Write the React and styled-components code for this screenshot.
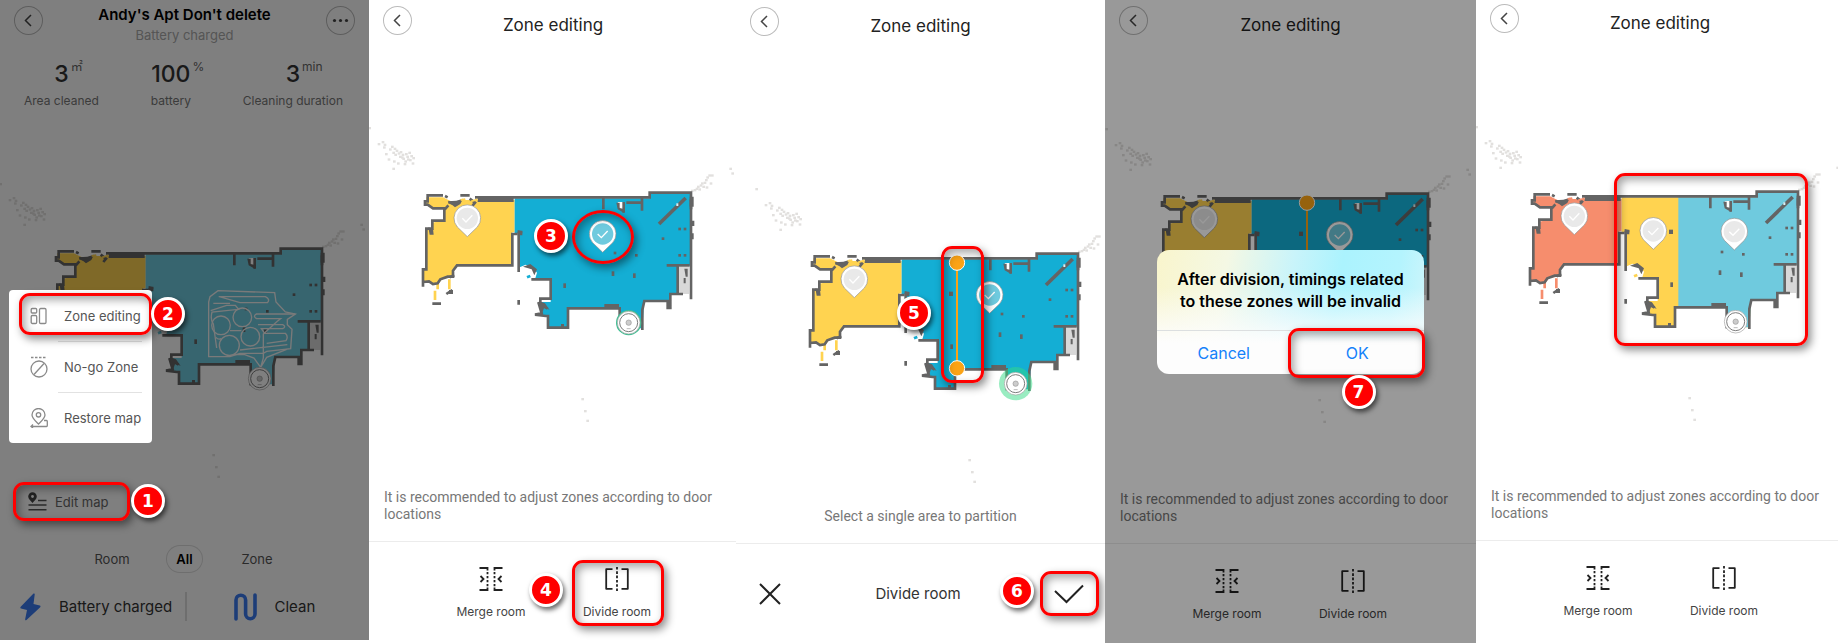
import React from "react";
import styled, { createGlobalStyle } from "styled-components";

const WALL = "#646464";
const YELLOW = "#ffd350";
const BLUE = "#14aed4";
const LIGHT_BLUE = "#6fcade";
const CORAL = "#f68d6d";

const GRAVEL = [
  [30, 432], [42, 426], [48, 434], [46, 442], [52, 462], [60, 478], [74, 506],
  [64, 448], [70, 440], [78, 446], [84, 452], [74, 458], [80, 464], [90, 460],
  [76, 484], [88, 490], [96, 456], [102, 464], [94, 470], [104, 476], [110, 484],
  [112, 462], [116, 470], [122, 458], [128, 468], [134, 474], [124, 480], [132, 490],
  [118, 478], [108, 492], [100, 472], [2, 384], [1085, 506], [1091, 520],
  [970, 572], [978, 570], [984, 566], [992, 568], [988, 560], [996, 556], [1004, 560],
  [1000, 550], [1008, 548], [1012, 540], [1016, 532], [1022, 526], [1030, 526],
  [1014, 562], [1026, 550], [641, 1197], [649, 1233], [656, 1262],
];

const SPECKS = [
  [932, 687], [948, 687], [882, 716], [802, 766], [738, 759], [932, 766], [948, 766],
];

function Pin({ x, y, fill = "#e9e9e9" }) {
  return (
    <g transform={`translate(${x} ${y})`}>
      <path
        d="M0 55 L-30 26 A40 40 0 1 1 30 26 Z"
        fill="#fff"
        stroke="#8f8f8f"
        strokeWidth="2"
      />
      <circle r="32" fill={fill} />
      <path d="M-15 0 L-4 11 L15 -9" fill="none" stroke="#fff" strokeWidth="4" />
    </g>
  );
}

function FloorMap({ left, right, far, door = true, pins = [], ring, halo, cut, trail }) {
  return (
    <MapSvg viewBox="0 360 1104 900" role="img" aria-label="Floor map">
      <g fill="#e2e0de">
        {GRAVEL.map(([x, y]) => (
          <rect key={`${x}-${y}`} x={x - 4} y={y - 3} width="8" height="7" />
        ))}
      </g>

      {/* rooms */}
      <path
        fill={left}
        d="M172 592H222L246 604L262 612L280 600H437V697H430V796H262L250 810V826L238 834L220 836L210 850L190 852L176 844L162 850V808H170V690H188V668L222 662L230 624H196L172 612Z"
      />
      <path
        fill={right}
        d="M437 595H842V580H965V797H925V882H904V926H896V903H824V930L820 985H752V925H597V983H537V948L514 946L522 930L512 906H545V838H498L504 818L490 800L470 794L452 802V700H437Z"
      />
      {far && (
        <path
          fill={far}
          d="M607 595H842V580H965V797H925V882H904V926H896V903H824V930L820 985H752V925H607Z"
        />
      )}
      <path fill="#d8d8d8" d="M928 800H960V882H928Z" />
      <path fill="#fff" d="M430 704H446V800H434ZM746 606L764 606L764 632L752 628Z" />

      {/* loose ends below the left room */}
      <path
        d="M206 850V868M198 872V900M241 838V868"
        stroke={left}
        strokeWidth="8"
        fill="none"
      />

      {/* walls */}
      <g fill="none" stroke={WALL} strokeWidth="8">
        <path d="M222 586H176V604H168V614H176L192 625H230L238 616L226 630V662H190V686H172V808H162V860M162 846L180 844L192 852L206 850L214 838L236 830H252V812L264 796H430V702H446" />
        <path d="M228 588L236 592M274 586H302M302 596L318 608L310 618M318 592H842V578H966V898" />
        <path d="M449 696V816M449 900V914M446 696H460M487 838H545V896H514V914L536 926M508 906L518 940L498 944L530 948H537V983H597V925H752V985L764 990M820 990V930L826 903H896V924H904V882H942" />
        <path d="M966 598V628M972 662V678M970 700V718M893 796H962M926 796V884M703 594V628M819 594V632M772 608H818M764 606V638" />
        <path d="M190 911H216M232 882L250 870M242 832L256 826M238 606L254 612" />
      </g>
      <path
        d="M326 600H434M706 918H750"
        stroke={WALL}
        strokeWidth="12"
        fill="none"
      />
      <path
        d="M236 604L262 602L282 596L274 612L258 622L246 612ZM462 800L484 792L504 808L496 826L488 808ZM742 608H752V624L768 628L764 638L746 628ZM178 682L192 686L194 704H182ZM512 904L528 910L542 930L526 922L520 938L512 926ZM962 590H974V620H962ZM446 690L460 694V706H448ZM946 806H956V830H950ZM944 834H950V850H944ZM240 870H252V882H240Z"
        fill={WALL}
      />
      <path d="M275 600L286 598L290 612M306 604L326 598" stroke={left} strokeWidth="6" fill="none" />
      <path d="M474 832L484 828" stroke={right} strokeWidth="8" />
      {door && (
        <>
          <path d="M870 672L950 594" stroke={WALL} strokeWidth="11" />
          <rect x="922" y="610" width="6" height="8" fill="#d8f1f6" />
        </>
      )}
      <g fill={WALL}>
        {SPECKS.map(([x, y]) => (
          <rect key={`${x}-${y}`} x={x - 4} y={y - 4} width="8" height="8" />
        ))}
        {!trail && <rect x="579" y="692" width="12" height="13" />}
        <rect x="728" y="814" width="8" height="14" />
        <rect x="792" y="820" width="8" height="14" />
        <rect x="583" y="850" width="8" height="14" />
        <rect x="576" y="972" width="9" height="9" />
      </g>

      {trail && (
        <g fill="none" stroke="#f4f4f4" strokeWidth="4">
          <path d="M626 904V738L630 722L654 704L824 710L828 738L856 768L886 774L862 790V806L876 820L872 878L800 886L790 892H720L690 902H626" />
          <path d="M640 742H690M656 722H796Q812 730 802 740H720L658 722M632 764L680 748H706L716 760L636 768Q630 790 640 804L650 876" />
          <path d="M768 774Q758 782 770 788H842L832 796L790 834V906L782 934M886 774H768M774 806H848Q860 812 848 818H784L794 832H856Q866 842 858 854L800 862M862 866L720 882M700 896H734L762 906L782 934L800 904L860 880M648 844Q654 852 664 848M690 824H724" />
          <circle cx="663" cy="808" r="28" />
          <circle cx="727" cy="784" r="28" />
          <circle cx="751" cy="842" r="28" />
          <circle cx="688" cy="868" r="30" />
        </g>
      )}

      {halo && <circle cx="779" cy="968" r="50" fill="#34d984" fillOpacity="0.5" />}
      {ring && <circle cx="779" cy="968" r="38" fill="#3fbf93" />}
      <circle cx="779" cy="968" r="34" fill="#fff" stroke="#a2a2a2" strokeWidth="2" />
      <circle cx="779" cy="968" r="27" fill="none" stroke="#7c7c7c" strokeWidth="3" />
      <circle cx="779" cy="968" r="8" fill="#ccc" stroke="#999" strokeWidth="2" />
      <path d="M773 986H785" stroke="#999" strokeWidth="2" />

      {pins.map((pin) => (
        <Pin key={pin.x} {...pin} />
      ))}

      {cut && (
        <g fill="#fba316" stroke="#fba316">
          <path d="M603 605V922" strokeWidth="6" />
          <circle cx="603" cy="605" r="23" stroke="#fff" strokeWidth="3" />
          <circle cx="603" cy="922" r="23" stroke="#fff" strokeWidth="3" />
        </g>
      )}
    </MapSvg>
  );
}

function ChevronIcon() {
  return (
    <svg width="29" height="29" viewBox="0 0 29 29" fill="none">
      <path d="M17 9L11.500 14.500L17 20" stroke="#444" strokeWidth="1.500" />
    </svg>
  );
}

function MergeIcon() {
  return (
    <svg width="24" height="24" viewBox="0 0 24 24" fill="none" stroke="#222" strokeWidth="1.800">
      <path d="M0.500 1H8.500V3.500M0.500 23H8.500V20.500M23.500 1H15.500V3.500M23.500 23H15.500V20.500" />
      <path d="M8.500 5V20M15.500 5V20" strokeDasharray="2.200 1.800" />
      <path d="M1.500 9L4.500 12L1.500 15M22.500 9L19.500 12L22.500 15" />
    </svg>
  );
}

function DivideIcon() {
  return (
    <svg width="24" height="24" viewBox="0 0 24 24" fill="none" stroke="#222" strokeWidth="1.800">
      <path d="M7.500 2.200H1.200V21.800H7.500M16.500 2.200H22.800V21.800H16.500" strokeLinejoin="round" />
      <path d="M12 0V24" strokeDasharray="2.600 1.700" />
    </svg>
  );
}

function ZonesIcon() {
  return (
    <svg width="18" height="18" viewBox="0 0 18 18" fill="none" stroke="#8a8a8a" strokeWidth="1.300">
      <rect x="1.200" y="1.500" width="5.500" height="4.500" rx="1" />
      <rect x="1.200" y="8.500" width="5.500" height="8" rx="1.200" />
      <rect x="9.500" y="1.500" width="6.500" height="15" rx="1.200" />
    </svg>
  );
}

function NoGoIcon() {
  return (
    <svg width="18" height="22" viewBox="0 0 18 22" fill="none" stroke="#8a8a8a" strokeWidth="1.300">
      <path d="M1 1.500H17" strokeDasharray="2.500 1.500" />
      <circle cx="9" cy="13" r="8" />
      <path d="M4 18.500L14 7.500" />
    </svg>
  );
}

function RestoreIcon() {
  return (
    <svg width="18" height="20" viewBox="0 0 18 20" fill="none" stroke="#8a8a8a" strokeWidth="1.300">
      <path d="M8.500 16C5 12.500 2 10 2 7A6.500 6.500 0 0 1 15 7C15 10 12 12.500 8.500 16Z" />
      <circle cx="8.500" cy="6.800" r="2.200" />
      <path d="M14 12.500H16.500Q17.300 12.500 17.300 13.500V17.500Q17.300 18.500 16.500 18.500H1M3 16.500L1 18.500L3 20" />
    </svg>
  );
}

function EditMapIcon() {
  return (
    <svg width="19" height="19" viewBox="0 0 19 19" fill="none">
      <path
        d="M4.500 11C2.500 8.500 0.200 7 0.200 4.500A4.300 4.300 0 0 1 8.800 4.500C8.800 7 6.500 8.500 4.500 11Z"
        fill="#444"
      />
      <circle cx="4.500" cy="4.500" r="1.400" fill="#fff" />
      <path d="M10 8.500H18.500M0.500 13H18.500M0.500 17.800H18.500" stroke="#555" strokeWidth="1.500" />
    </svg>
  );
}

function BackButton() {
  return (
    <RoundButton type="button" aria-label="Back">
      <ChevronIcon />
    </RoundButton>
  );
}

function ToolFooter({ height, children }) {
  return (
    <Footer $height={height}>
      <Tools>
        <Tool type="button">
          <MergeIcon />
          Merge room
        </Tool>
        <Anchor>
          <Tool type="button">
            <DivideIcon />
            Divide room
          </Tool>
          {children}
        </Anchor>
      </Tools>
    </Footer>
  );
}

const zonePins = [
  { x: 295, y: 655 },
  { x: 701, y: 702, fill: LIGHT_BLUE },
];

function HomeScreen() {
  return (
    <Screen $short>
      <Header $top={6}>
        <BackButton />
        <Heading>
          <Name>Andy's Apt Don't delete</Name>
          <Status>Battery charged</Status>
        </Heading>
        <RoundButton type="button" aria-label="More">
          <svg width="29" height="29" viewBox="0 0 29 29" fill="#444">
            <circle cx="8.500" cy="14.500" r="1.600" />
            <circle cx="14.500" cy="14.500" r="1.600" />
            <circle cx="20.500" cy="14.500" r="1.600" />
          </svg>
        </RoundButton>
      </Header>
      <Stats>
        <Stat>
          <Value>
            3<Unit>㎡</Unit>
          </Value>
          Area cleaned
        </Stat>
        <Stat>
          <Value>
            100<Unit>%</Unit>
          </Value>
          battery
        </Stat>
        <Stat>
          <Value>
            3<Unit>min</Unit>
          </Value>
          Cleaning duration
        </Stat>
      </Stats>
      <Stage $top={66}>
        <FloorMap left={YELLOW} right={LIGHT_BLUE} door={false} trail />
      </Stage>
      <EditAnchor>
        <EditButton type="button">
          <EditMapIcon />
          Edit map
        </EditButton>
        <Callout $x={0} $y={0} $w={117} $h={39} />
        <Badge $x={118} $y={2}>1</Badge>
      </EditAnchor>
      <Tabs>
        <Tab type="button">Room</Tab>
        <Tab type="button" $active>
          All
        </Tab>
        <Tab type="button">Zone</Tab>
      </Tabs>
      <Actions>
        <Action type="button">
          <svg width="21" height="28" viewBox="0 0 21 28" fill="#3b7bf0">
            <path d="M13.500 0.500Q15 0 14.700 1.500L13.500 11L19.800 12.500Q21 13 20.200 14.200L6.500 27Q5 28 5.200 26L7 17L1 15.500Q-0.200 15 0.700 13.800Z" />
          </svg>
          Battery charged
        </Action>
        <Action type="button" $second>
          <svg width="23" height="28" viewBox="0 0 23 28" fill="none">
            <path
              d="M2 26V7A4.800 4.800 0 0 1 11.600 7V21A4.700 4.700 0 0 0 21 21V2"
              stroke="#3b7bf0"
              strokeWidth="3.600"
              strokeLinecap="round"
            />
          </svg>
          Clean
        </Action>
      </Actions>
      <Scrim $alpha={0.5} />
      <Menu>
        <MenuItem>
          <MenuButton type="button">
            <ZonesIcon />
            Zone editing
          </MenuButton>
          <Callout $x={10} $y={3} $w={133} $h={42} />
          <Badge $x={142} $y={7}>2</Badge>
        </MenuItem>
        <MenuItem>
          <MenuButton type="button">
            <NoGoIcon />
            No-go Zone
          </MenuButton>
        </MenuItem>
        <MenuItem>
          <MenuButton type="button">
            <RestoreIcon />
            Restore map
          </MenuButton>
        </MenuItem>
      </Menu>
    </Screen>
  );
}

function App() {
  return (
    <>
      <GlobalStyle />
      <Board>
        <HomeScreen />

        <Screen>
          <Header $top={6}>
            <BackButton />
            <Title>Zone editing</Title>
          </Header>
          <Stage $top={72}>
            <FloorMap left={YELLOW} right={BLUE} pins={zonePins} ring />
            <Callout $round $x={203} $y={90} $w={62} $h={54} />
            <Badge $x={165} $y={99}>3</Badge>
          </Stage>
          <Hint>It is recommended to adjust zones according to door locations</Hint>
          <ToolFooter height={102}>
            <Callout $x={18} $y={18} $w={92} $h={66} />
            <Badge $x={-25} $y={31}>4</Badge>
          </ToolFooter>
        </Screen>

        <Screen>
          <Header $top={7}>
            <BackButton />
            <Title>Zone editing</Title>
          </Header>
          <Stage $top={133} $left={20}>
            <FloorMap left={YELLOW} right={BLUE} pins={zonePins} halo cut />
            <Callout $x={205} $y={65} $w={43} $h={137} />
            <Badge $x={161} $y={115}>5</Badge>
          </Stage>
          <Hint $center>Select a single area to partition</Hint>
          <Footer $height={100}>
            <ConfirmBar>
              <IconButton type="button" aria-label="Cancel">
                <svg width="24" height="24" viewBox="0 0 24 24" stroke="#222" strokeWidth="2">
                  <path d="M2 2L22 22M22 2L2 22" />
                </svg>
              </IconButton>
              <span>Divide room</span>
              <Anchor>
                <IconButton type="button" aria-label="Confirm">
                  <svg width="30" height="20" viewBox="0 0 30 20" fill="none" stroke="#222" strokeWidth="2">
                    <path d="M1 7L12.500 18L29 1.500" />
                  </svg>
                </IconButton>
                <Callout $x={-14} $y={-13} $w={59} $h={45} />
                <Badge $x={-54} $y={-10}>6</Badge>
              </Anchor>
            </ConfirmBar>
          </Footer>
        </Screen>

        <Screen>
          <Header $top={6}>
            <BackButton />
            <Title>Zone editing</Title>
          </Header>
          <Stage $top={73} $left={1}>
            <FloorMap left={YELLOW} right={BLUE} pins={zonePins} cut />
          </Stage>
          <Hint>It is recommended to adjust zones according to door locations</Hint>
          <ToolFooter height={100} />
          <Scrim $alpha={0.4} />
          <Dialog role="alertdialog" aria-labelledby="divide-message">
            <Message id="divide-message">
              After division, timings related to these zones will be invalid
            </Message>
            <Choices>
              <Choice type="button">Cancel</Choice>
              <Anchor>
                <Choice type="button">OK</Choice>
                <Callout $x={-3} $y={-3} $w={137} $h={50} />
                <Badge $x={51} $y={44}>7</Badge>
              </Anchor>
            </Choices>
          </Dialog>
        </Screen>

        <Screen>
          <Header $top={4}>
            <BackButton />
            <Title>Zone editing</Title>
          </Header>
          <Stage $top={71}>
            <FloorMap
              left={CORAL}
              right={YELLOW}
              far={LIGHT_BLUE}
              pins={[
                { x: 295, y: 652 },
                { x: 532, y: 696 },
                { x: 775, y: 698 },
              ]}
            />
            <Callout $x={138} $y={54} $w={194} $h={173} />
          </Stage>
          <Hint>It is recommended to adjust zones according to door locations</Hint>
          <ToolFooter height={103} />
        </Screen>
      </Board>
    </>
  );
}

const GlobalStyle = createGlobalStyle`
  body {
    margin: 0;
    background: #fff;
    font-family: Inter, "Noto Sans CJK SC", sans-serif;
    color: #222;
  }
  button {
    font: inherit;
    color: inherit;
    background: none;
    border: 0;
    padding: 0;
    cursor: pointer;
  }
  svg {
    display: block;
    flex: none;
  }
`;
const Board = styled.main`
  display: grid;
  grid-template-columns:
    minmax(0, 369fr) minmax(0, 367fr) minmax(0, 369fr) minmax(0, 371fr)
    minmax(0, 362fr);
  min-height: 100vh;
`;
const Screen = styled.section`
  position: relative;
  display: flex;
  flex-direction: column;
  overflow: hidden;
  background: #fff;
  margin-bottom: ${(p) => (p.$short ? 3 : 0)}px;
  > * {
    min-width: 368px;
    box-sizing: border-box;
  }
`;
const Header = styled.header`
  display: grid;
  grid-template-columns: 29px 1fr 29px;
  align-items: start;
  height: 48px;
  padding: ${(p) => p.$top}px 14px 0;
`;
const RoundButton = styled.button`
  box-sizing: border-box;
  width: 29px;
  height: 29px;
  border-radius: 50%;
  box-shadow: inset 0 0 0 1px #bbb;
`;
const Title = styled.h2`
  margin: 8px 0 0;
  font-size: 17px;
  line-height: 22px;
  font-weight: 400;
  text-align: center;
`;
const Heading = styled.div`
  text-align: center;
  margin-top: -2px;
`;
const Name = styled.h1`
  margin: 0;
  font-size: 15px;
  line-height: 22px;
  font-weight: 600;
  color: #000;
`;
const Status = styled.div`
  font-size: 13px;
  line-height: 18px;
  color: #aaa;
`;
const Stats = styled.div`
  display: flex;
  justify-content: space-between;
  padding: 12px 26px 0 24px;
`;
const Stat = styled.div`
  font-size: 12px;
  line-height: 18px;
  color: #777;
  text-align: center;
`;
const Value = styled.div`
  position: relative;
  width: max-content;
  margin: 0 auto 4px;
  font-size: 23px;
  line-height: 28px;
  font-weight: 500;
  color: #333;
`;
const Unit = styled.sup`
  position: absolute;
  left: 100%;
  top: 0;
  padding-left: 2px;
  font-size: 12px;
  line-height: 14px;
  font-weight: 400;
  color: #666;
`;
const Stage = styled.div`
  position: relative;
  flex: 1;
  margin-top: ${(p) => p.$top}px;
  padding-left: ${(p) => p.$left || 0}px;
`;
const MapSvg = styled.svg`
  width: 368px;
  height: 300px;
  overflow: visible;
`;
const Hint = styled.p`
  margin: 0 0 18px;
  padding: 0 15px;
  font-family: Roboto, sans-serif;
  font-size: 14px;
  line-height: 17px;
  color: #777;
  text-align: ${(p) => (p.$center ? "center" : "left")};
`;
const Footer = styled.footer`
  box-sizing: border-box;
  height: ${(p) => p.$height}px;
  border-top: 1px solid #ececec;
`;
const Tools = styled.div`
  display: flex;
  padding-left: 59px;
`;
const Tool = styled.button`
  display: flex;
  flex-direction: column;
  align-items: center;
  gap: 13px;
  width: 126px;
  padding-top: 25px;
  font-size: 12px;
  line-height: 16px;
  color: #444;
`;
const Anchor = styled.div`
  position: relative;
`;
const ConfirmBar = styled.div`
  display: flex;
  align-items: center;
  justify-content: space-between;
  height: 100%;
  padding: 0 21px 0 22px;
  font-size: 15px;
  color: #333;
`;
const IconButton = styled.button`
  display: block;
`;
const EditAnchor = styled.div`
  position: relative;
  align-self: flex-start;
  margin: 0 13px 24px;
`;
const EditButton = styled.button`
  display: flex;
  align-items: center;
  gap: 8px;
  height: 39px;
  padding-left: 15px;
  font-size: 13px;
  color: #666;
`;
const Tabs = styled.nav`
  display: flex;
  justify-content: center;
  gap: 19px;
`;
const Tab = styled.button`
  height: 28px;
  min-width: ${(p) => (p.$active ? 37 : 70)}px;
  border-radius: 14px;
  box-shadow: ${(p) => (p.$active ? "inset 0 0 0 1px #ddd" : "none")};
  font-size: 13px;
  font-weight: ${(p) => (p.$active ? 600 : 400)};
  color: ${(p) => (p.$active ? "#000" : "#555")};
`;
const Actions = styled.div`
  display: grid;
  grid-template-columns: 1fr 1fr;
  align-items: center;
  height: 67px;
`;
const Action = styled.button`
  display: flex;
  align-items: center;
  gap: 18px;
  height: 29px;
  padding-left: ${(p) => (p.$second ? 47 : 20)}px;
  border-left: ${(p) => (p.$second ? "2px solid #ddd" : "none")};
  font-size: 15px;
  color: #333;
  white-space: nowrap;
`;
const Scrim = styled.div`
  position: absolute;
  inset: 0;
  background: rgba(0, 0, 0, ${(p) => p.$alpha});
`;
const Menu = styled.ul`
  position: absolute;
  left: 9px;
  top: 290px;
  width: 143px;
  && {
    min-width: 0;
  }
  margin: 0;
  padding: 0;
  list-style: none;
  background: #fff;
  border-radius: 4px;
`;
const MenuItem = styled.li`
  position: relative;
  & + &::before {
    content: "";
    position: absolute;
    left: 49px;
    right: 10px;
    top: 0;
    border-top: 1px solid #e2e2e2;
  }
`;
const MenuButton = styled.button`
  display: flex;
  align-items: center;
  gap: 16px;
  width: 100%;
  height: 51px;
  padding-left: 21px;
  font-size: 13px;
  color: #555;
  white-space: nowrap;
`;
const Dialog = styled.div`
  position: absolute;
  left: 52px;
  top: 250px;
  width: 267px;
  && {
    min-width: 0;
  }
  border-radius: 12px;
  background:
    linear-gradient(to bottom, transparent 30%, #fdfdfd 75%),
    linear-gradient(100deg, #f9f5cc 0%, #f4f8e4 25%, #c9f4fa 48%, #abf3fe 65%, #b4f4fe 85%, #d5f6fa 100%);
`;
const Message = styled.p`
  margin: 0;
  padding: 18px 12px 18px;
  font-size: 16px;
  line-height: 22px;
  font-weight: 600;
  color: #000;
  text-align: center;
`;
const Choices = styled.div`
  display: grid;
  grid-template-columns: 1fr 1fr;
  border-top: 1px solid #dcdfe0;
`;
const Choice = styled.button`
  width: 100%;
  height: 43px;
  font-size: 16px;
  color: #1481fa;
`;
const Callout = styled.span`
  position: absolute;
  z-index: 1;
  left: ${(p) => p.$x}px;
  top: ${(p) => p.$y}px;
  width: ${(p) => p.$w}px;
  height: ${(p) => p.$h}px;
  box-sizing: border-box;
  border: 3px solid #f00;
  border-radius: ${(p) => (p.$round ? "50%" : "11px")};
  box-shadow:
    3px 4px 8px rgba(0, 0, 0, 0.45),
    inset 3px 4px 8px rgba(0, 0, 0, 0.35);
  pointer-events: none;
`;
const Badge = styled.span`
  position: absolute;
  z-index: 2;
  left: ${(p) => p.$x}px;
  top: ${(p) => p.$y}px;
  width: 34px;
  height: 34px;
  box-sizing: border-box;
  border: 3px solid #fff;
  border-radius: 50%;
  background: #f00;
  box-shadow: 2px 3px 5px rgba(0, 0, 0, 0.6);
  font: bold 17px/28px "DejaVu Sans", sans-serif;
  text-align: center;
  color: #fff;
`;
export default App;
